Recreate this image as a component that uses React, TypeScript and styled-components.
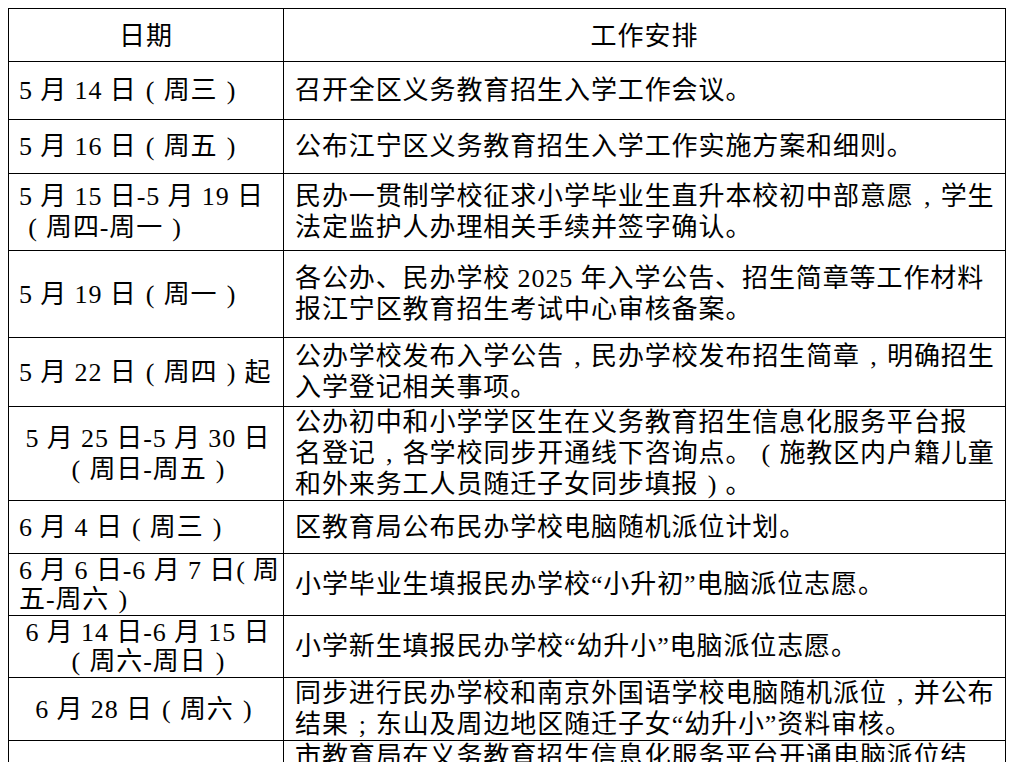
import React from "react";
import styled, { createGlobalStyle } from "styled-components";

const GlobalStyle = createGlobalStyle`
	body {
		margin: 8px;
		background: #ffffff;
		color: #000000;
		font-family: "Liberation Serif", "Noto Sans CJK SC", serif;
	}
`;

const Schedule = styled.table`
	width: 998px;
	border-collapse: collapse;
	table-layout: fixed;
	font-family: "Liberation Serif", "Noto Sans CJK SC", serif;
	font-size: 26px;
	line-height: 31px;
	letter-spacing: 0.9px;
`;

const HeadCell = styled.th`
	border: 1px solid #000;
	height: 49px;
	padding: 0 0 3px;
	font-weight: normal;
	text-align: center;
	vertical-align: middle;
	font-family: "Noto Sans CJK SC", serif;
	letter-spacing: 1px;
`;

const DateCell = styled.td<{ $align: "left" | "center"; $h: number; $tight?: boolean }>`
	border: 1px solid #000;
	height: ${(p) => p.$h}px;
	padding: 0 6px 0 10px;
	text-align: ${(p) => p.$align};
	vertical-align: middle;
	line-height: ${(p) => (p.$tight ? "29px" : "31px")};
	overflow: hidden;
`;

const WorkCell = styled.td`
	border: 1px solid #000;
	padding: 0 4px 0 11px;
	text-align: left;
	vertical-align: middle;
	overflow: hidden;
`;

const Line = styled.span`
	display: block;
	white-space: nowrap;
`;

// fullwidth brackets and commas sit in the middle of their cell in the source
const Punct = styled.span`
	display: inline-block;
	width: 27px;
	line-height: 1;
	text-align: center;
	letter-spacing: 0;
	font-family: "Liberation Serif", serif;
`;

const punctMap: Record<string, string> = {
	"（": "(",
	"）": ")",
	"，": ",",
	"；": ";",
};

function renderText(text: string) {
	const parts: React.ReactNode[] = [];
	let buf = "";
	Array.from(text).forEach((ch, i) => {
		if (punctMap[ch]) {
			if (buf) parts.push(buf);
			buf = "";
			parts.push(<Punct key={i}>{punctMap[ch]}</Punct>);
		} else {
			buf += ch;
		}
	});
	if (buf) parts.push(buf);
	return parts;
}

interface Row {
	date: string[];
	align: "left" | "center";
	work: string[];
	h: number;
	tight?: boolean;
}

const rows: Row[] = [
	{ date: ["5 月 14 日（周三）"], align: "left", work: ["召开全区义务教育招生入学工作会议。"], h: 57 },
	{ date: ["5 月 16 日（周五）"], align: "left", work: ["公布江宁区义务教育招生入学工作实施方案和细则。"], h: 53 },
	{
		date: ["5 月 15 日-5 月 19 日", "（周四-周一）"],
		align: "left",
		work: ["民办一贯制学校征求小学毕业生直升本校初中部意愿，学生", "法定监护人办理相关手续并签字确认。"],
		h: 76,
	},
	{
		date: ["5 月 19 日（周一）"],
		align: "left",
		work: ["各公办、民办学校 2025 年入学公告、招生简章等工作材料", "报江宁区教育招生考试中心审核备案。"],
		h: 86,
	},
	{
		date: ["5 月 22 日（周四）起"],
		align: "left",
		work: ["公办学校发布入学公告，民办学校发布招生简章，明确招生", "入学登记相关事项。"],
		h: 68,
	},
	{
		date: ["5 月 25 日-5 月 30 日", "（周日-周五）"],
		align: "center",
		work: [
			"公办初中和小学学区生在义务教育招生信息化服务平台报",
			"名登记，各学校同步开通线下咨询点。（施教区内户籍儿童",
			"和外来务工人员随迁子女同步填报）。",
		],
		h: 93,
	},
	{ date: ["6 月 4 日（周三）"], align: "left", work: ["区教育局公布民办学校电脑随机派位计划。"], h: 52 },
	{
		date: ["6 月 6 日-6 月 7 日( 周", "五-周六）"],
		align: "left",
		work: ["小学毕业生填报民办学校“小升初”电脑派位志愿。"],
		h: 61,
		tight: true,
	},
	{
		date: ["6 月 14 日-6 月 15 日", "（周六-周日）"],
		align: "center",
		work: ["小学新生填报民办学校“幼升小”电脑派位志愿。"],
		h: 61,
		tight: true,
	},
	{
		date: ["6 月 28 日（周六）"],
		align: "center",
		work: ["同步进行民办学校和南京外国语学校电脑随机派位，并公布", "结果；东山及周边地区随迁子女“幼升小”资料审核。"],
		h: 62,
	},
	{
		date: ["6 月 30 日（周一）"],
		align: "center",
		work: [
			"市教育局在义务教育招生信息化服务平台开通电脑派位结",
			"果查询通道，各民办学校同步公布派位录取名单。",
			"",
		],
		h: 93,
	},
];

export default function App() {
	return (
		<>
			<GlobalStyle />
			<Schedule>
				<colgroup>
					<col style={{ width: 275 }} />
					<col />
				</colgroup>
				<thead>
					<tr>
						<HeadCell>日期</HeadCell>
						<HeadCell>工作安排</HeadCell>
					</tr>
				</thead>
				<tbody>
					{rows.map((row, index) => (
						<tr key={index}>
							<DateCell $align={row.align} $h={row.h} $tight={row.tight}>
								{row.date.map((text, i) => (
									<Line key={i}>{renderText(text)}</Line>
								))}
							</DateCell>
							<WorkCell>
								{row.work.map((text, i) => (
									<Line key={i}>{text ? renderText(text) : "\u00a0"}</Line>
								))}
							</WorkCell>
						</tr>
					))}
				</tbody>
			</Schedule>
		</>
	);
}
